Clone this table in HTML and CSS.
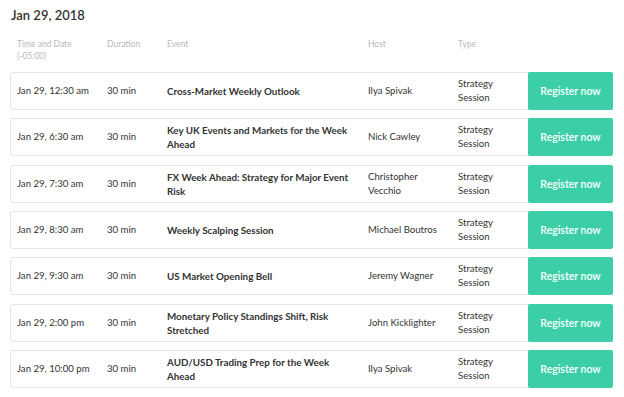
FILE: index.html
```html
<!DOCTYPE html>
<html>
<head>
<meta charset="utf-8">
<link rel="stylesheet" href="styles.css">
</head>
<body>
<div class="page">
  <h1 class="day">Jan 29, 2018</h1>
  <div class="grid head">
    <div class="hcell">Time and Date<br>(-05:00)</div>
    <div class="hcell">Duration</div>
    <div class="hcell">Event</div>
    <div class="hcell">Host</div>
    <div class="hcell">Type</div>
    <div></div>
  </div>
  <div class="list">
    <div class="grid row">
      <div class="cell">Jan 29, 12:30 am</div>
      <div class="cell">30 min</div>
      <div class="cell event">Cross-Market Weekly Outlook</div>
      <div class="cell host">Ilya Spivak</div>
      <div class="cell type">Strategy Session</div>
      <a class="btn">Register now</a>
    </div>
    <div class="grid row">
      <div class="cell">Jan 29, 6:30 am</div>
      <div class="cell">30 min</div>
      <div class="cell event">Key UK Events and Markets for the Week Ahead</div>
      <div class="cell host">Nick Cawley</div>
      <div class="cell type">Strategy Session</div>
      <a class="btn">Register now</a>
    </div>
    <div class="grid row">
      <div class="cell">Jan 29, 7:30 am</div>
      <div class="cell">30 min</div>
      <div class="cell event">FX Week Ahead: Strategy for Major Event Risk</div>
      <div class="cell host">Christopher Vecchio</div>
      <div class="cell type">Strategy Session</div>
      <a class="btn">Register now</a>
    </div>
    <div class="grid row">
      <div class="cell">Jan 29, 8:30 am</div>
      <div class="cell">30 min</div>
      <div class="cell event">Weekly Scalping Session</div>
      <div class="cell host">Michael Boutros</div>
      <div class="cell type">Strategy Session</div>
      <a class="btn">Register now</a>
    </div>
    <div class="grid row">
      <div class="cell">Jan 29, 9:30 am</div>
      <div class="cell">30 min</div>
      <div class="cell event">US Market Opening Bell</div>
      <div class="cell host">Jeremy Wagner</div>
      <div class="cell type">Strategy Session</div>
      <a class="btn">Register now</a>
    </div>
    <div class="grid row">
      <div class="cell">Jan 29, 2:00 pm</div>
      <div class="cell">30 min</div>
      <div class="cell event">Monetary Policy Standings Shift, Risk Stretched</div>
      <div class="cell host">John Kicklighter</div>
      <div class="cell type">Strategy Session</div>
      <a class="btn">Register now</a>
    </div>
    <div class="grid row">
      <div class="cell">Jan 29, 10:00 pm</div>
      <div class="cell">30 min</div>
      <div class="cell event">AUD/USD Trading Prep for the Week Ahead</div>
      <div class="cell host">Ilya Spivak</div>
      <div class="cell type">Strategy Session</div>
      <a class="btn">Register now</a>
    </div>
  </div>
</div>
</body>
</html>
```

FILE: styles.css
```css
html, body {
  margin: 0;
  padding: 0;
  background: #ffffff;
}
body {
  font-family: Lato, "Open Sans", "Liberation Sans", sans-serif;
  color: #333333;
}
.page {
  width: 602px;
  padding: 6px 0 0 10px;
}
.day {
  margin: 0 0 0 1px;
  font-size: 13px;
  font-weight: 600;
  line-height: 19px;
  color: #333333;
}
.grid {
  display: grid;
  grid-template-columns: 90px 60px 201px 90px 70px 84px;
  box-sizing: border-box;
  padding-left: 6px;
}
.head {
  margin-top: 13px;
  padding-left: 7px;
  height: 34px;
}
.hcell {
  font-size: 8.5px;
  line-height: 12px;
  color: #b8b8b8;
}
.list {
  display: flex;
  flex-direction: column;
  gap: 8.33px;
}
.row {
  height: 38px;
  border: 1px solid #e4e4e4;
  border-radius: 3px;
  align-items: center;
  background: #ffffff;
}
.cell {
  font-size: 9.6px;
  line-height: 14px;
  color: #333333;
}
.event {
  font-size: 9.8px;
  font-weight: 700;
  padding-right: 16px;
}
.host {
  padding-right: 12px;
}
.type {
  padding-right: 24px;
}
.btn {
  align-self: stretch;
  margin: -1px -1px -1px 0;
  background: #3ccea7;
  color: #ffffff;
  border-radius: 2px;
  display: flex;
  align-items: center;
  justify-content: center;
  font-size: 10.5px;
  font-weight: 600;
}
```
